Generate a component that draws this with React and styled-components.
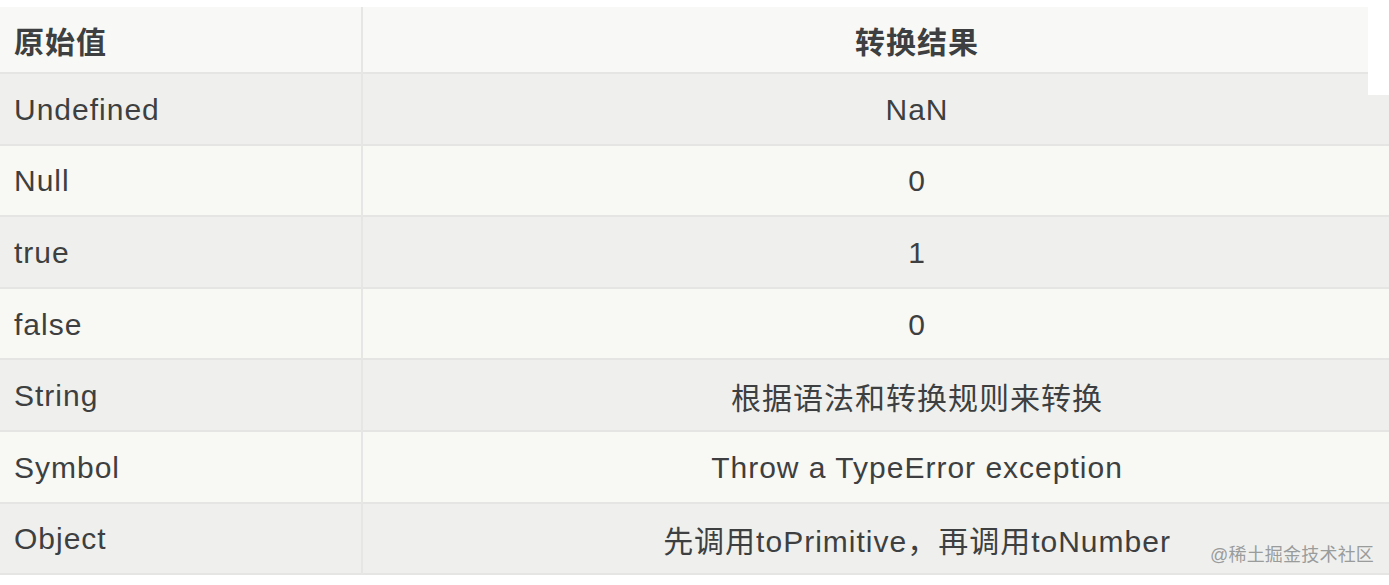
import styled, { createGlobalStyle } from "styled-components";

const GlobalStyle = createGlobalStyle`
  html, body {
    margin: 0;
    padding: 0;
    background: #ffffff;
  }
  body {
    font-family: "Liberation Sans", "Noto Sans CJK SC", sans-serif;
  }
`;

const Page = styled.div`
  position: relative;
  width: 1389px;
  height: 585px;
  padding-top: 7px;
  box-sizing: border-box;
  background: #ffffff;
  overflow: hidden;
`;

const Table = styled.div`
  display: grid;
  grid-template-columns: 361px 1fr;
  width: 100%;
`;

const Row = styled.div`
  display: contents;
`;

const Cell = styled.div`
  display: flex;
  align-items: center;
  justify-content: ${(p) => (p.$center ? "center" : "flex-start")};
  height: ${(p) => (p.$head ? "67px" : "71.6px")};
  box-sizing: border-box;
  padding-left: ${(p) => (p.$center ? "82px" : "14px")};
  padding-top: ${(p) => (p.$head ? "0" : "2px")};
  background: ${(p) => p.$bg};
  border-bottom: 2px solid #e5e6e3;
  border-left: ${(p) => (p.$center ? "2px solid #e6e7e4" : "none")};
  color: #3d3f40;
  font-size: 30px;
  letter-spacing: 1px;
  font-weight: ${(p) => (p.$head ? 700 : 400)};
  white-space: nowrap;
`;

const Corner = styled.div`
  position: absolute;
  top: 0;
  right: 0;
  width: 21px;
  height: 95px;
  background: #ffffff;
`;

const Watermark = styled.div`
  position: absolute;
  left: 1210px;
  top: 540px;
  font-size: 18px;
  color: #9a9c9c;
  letter-spacing: 0.2px;
`;

const rows = [
  ["Undefined", "NaN"],
  ["Null", "0"],
  ["true", "1"],
  ["false", "0"],
  ["String", "根据语法和转换规则来转换"],
  ["Symbol", "Throw a TypeError exception"],
  ["Object", "先调用toPrimitive，再调用toNumber"],
];

export default function App() {
  return (
    <>
      <GlobalStyle />
      <Page>
        <Table>
          <Row>
            <Cell $head $bg="#f8f9f6">原始值</Cell>
            <Cell $head $center $bg="#f8f9f6">转换结果</Cell>
          </Row>
          {rows.map(([k, v], i) => {
            const bg = i % 2 === 0 ? "#eff0ee" : "#f8f8f5";
            return (
              <Row key={k}>
                <Cell $bg={bg}>{k}</Cell>
                <Cell $center $bg={bg}>{v}</Cell>
              </Row>
            );
          })}
        </Table>
        <Corner />
        <Watermark>@稀土掘金技术社区</Watermark>
      </Page>
    </>
  );
}
